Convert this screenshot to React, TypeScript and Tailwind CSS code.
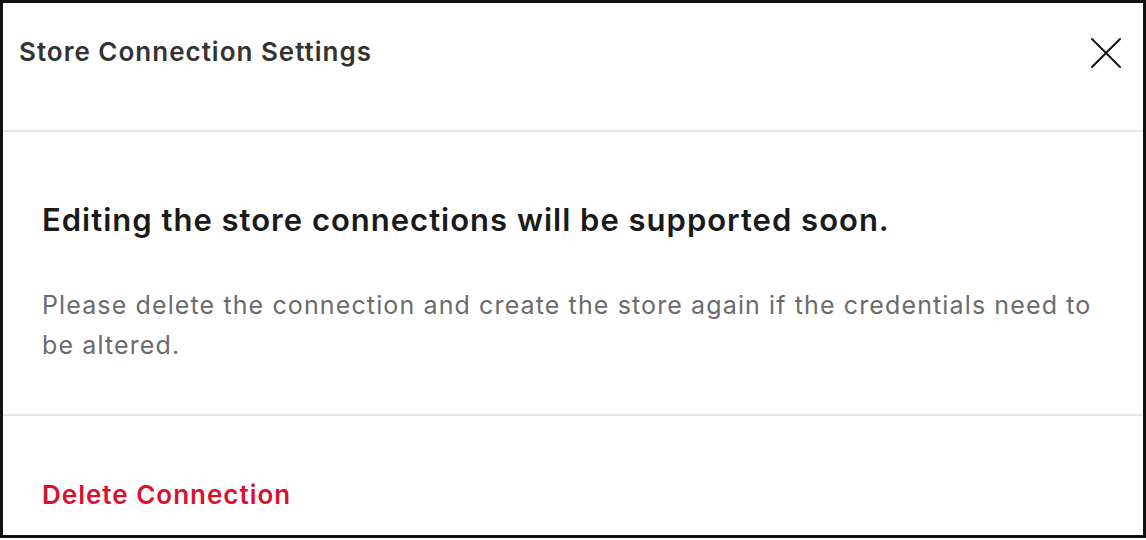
function CloseIcon() {
  return (
    <svg width="32" height="32" viewBox="0 0 32 32" fill="none" aria-hidden="true">
      <path d="M2 2 L30 30 M30 2 L2 30" stroke="#111" strokeWidth="2" strokeLinecap="round" />
    </svg>
  );
}

export default function App() {
  return (
    <div className="w-[1146px] h-[540px] bg-white font-['Inter','Noto_Sans',sans-serif]">
      <div className="w-[1146px] h-[538px] border-[3px] border-[#111] flex flex-col">
        {/* header */}
        <div className="h-[127px] flex items-start justify-between pl-[16px] pr-[21px] pt-[33px]">
          <h1 className="text-[26px] leading-[32px] font-semibold tracking-[1px] text-[#333]">
            Store Connection Settings
          </h1>
          <button className="mt-[1px]" aria-label="Close">
            <CloseIcon />
          </button>
        </div>
        <div className="h-[2px] bg-[#e6e6e6]" />

        {/* body */}
        <div className="h-[282px] px-[39px] pt-[69px]">
          <h2 className="text-[31px] leading-[38px] font-semibold tracking-[1px] text-[#1a1a1a]">
            Editing the store connections will be supported soon.
          </h2>
          <p className="mt-[46px] text-[25px] leading-[40px] tracking-[1.12px] text-[#6b6b6b]">
            Please delete the connection and create the store again if the credentials need to be altered.
          </p>
        </div>
        <div className="h-[2px] bg-[#e6e6e6]" />

        {/* footer */}
        <div className="flex-1 px-[39px] pt-[62px]">
          <button className="text-[26px] leading-[34px] font-semibold tracking-[1px] text-[#d9112e]">
            Delete Connection
          </button>
        </div>
      </div>
    </div>
  );
}
